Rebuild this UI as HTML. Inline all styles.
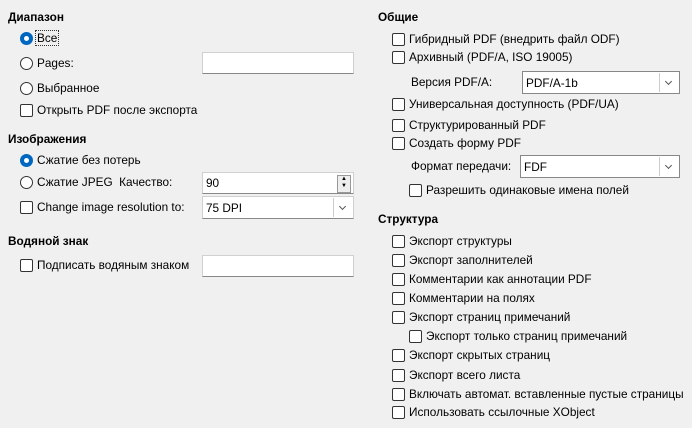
<!DOCTYPE html><html><head><meta charset="utf-8"><style>
body{margin:0;width:692px;height:428px;background:#f0f0f0;font-family:"Liberation Sans","DejaVu Sans",sans-serif;font-size:11.8px;color:#000;position:relative;overflow:hidden}
.t{position:absolute;white-space:nowrap;line-height:14px}
.b{font-weight:bold}
.cb{position:absolute;width:11px;height:11px;border:1px solid #333;border-radius:2px;background:#fff}
.rb{position:absolute;width:11px;height:11px;border:1px solid #333;border-radius:50%;background:#fff}
.rs{position:absolute;width:5px;height:5px;border:4px solid #0067c0;border-radius:50%;background:#fff}
.in{position:absolute;background:#fff;border:1px solid #d0d0d0;border-bottom:1px solid #888;box-sizing:border-box;padding:3px 3px;line-height:14px}
.dd{position:absolute;right:1px;top:1px;bottom:1px;width:18px;border-left:1px solid #ccc;background:#fff}
.dd:after{content:"";position:absolute;left:6px;top:6px;width:4px;height:4px;border-right:1px solid #555;border-bottom:1px solid #555;transform:rotate(45deg)}
</style></head><body>
<div class="t b" style="left:8px;top:10px">Диапазон</div>
<div class="rs" style="left:20px;top:32px"></div><div class="t" style="left:36px;top:31px;outline:1px dotted #333;padding:0 1px">Все</div>
<div class="rb" style="left:20px;top:57px"></div><div class="t" style="left:37px;top:56px">Pages:</div>
<div class="in" style="left:202px;top:52px;width:152px;height:22px"></div>
<div class="rb" style="left:20px;top:82px"></div><div class="t" style="left:37px;top:81px">Выбранное</div>
<div class="cb" style="left:20px;top:104px"></div><div class="t" style="left:37px;top:103px">Открыть PDF после экспорта</div>
<div class="t b" style="left:8px;top:132px">Изображения</div>
<div class="rs" style="left:20px;top:154px"></div><div class="t" style="left:37px;top:153px">Сжатие без потерь</div>
<div class="rb" style="left:20px;top:176px"></div><div class="t" style="left:37px;top:175px">Сжатие JPEG&nbsp; Качество:</div>
<div class="in" style="left:202px;top:172px;width:152px;height:22px">90
<div style="position:absolute;right:2px;top:2px;width:12px;height:16px;background:#eee;border:1px solid #999;font-size:6px;line-height:7px;text-align:center">▲<br>▼</div></div>
<div class="cb" style="left:20px;top:201px"></div><div class="t" style="left:37px;top:200px">Change image resolution to:</div>
<div class="in" style="left:202px;top:196px;width:152px;height:23px;padding-top:4px">75 DPI<div class="dd"></div></div>
<div class="t b" style="left:8px;top:234px">Водяной знак</div>
<div class="cb" style="left:20px;top:259px"></div><div class="t" style="left:37px;top:258px">Подписать водяным знаком</div>
<div class="in" style="left:202px;top:255px;width:152px;height:22px"></div>

<div class="t b" style="left:378px;top:10px">Общие</div>
<div class="cb" style="left:392px;top:33px"></div><div class="t" style="left:409px;top:32px">Гибридный PDF (внедрить файл ODF)</div>
<div class="cb" style="left:392px;top:51px"></div><div class="t" style="left:409px;top:50px">Архивный (PDF/A, ISO 19005)</div>
<div class="t" style="left:411px;top:75px">Версия PDF/A:</div>
<div class="in" style="left:522px;top:71px;width:158px;height:23px;padding-top:4px;border-color:#888">PDF/A-1b<div class="dd"></div></div>
<div class="cb" style="left:392px;top:98px"></div><div class="t" style="left:409px;top:97px">Универсальная доступность (PDF/UA)</div>
<div class="cb" style="left:392px;top:119px"></div><div class="t" style="left:409px;top:118px">Структурированный PDF</div>
<div class="cb" style="left:392px;top:137px"></div><div class="t" style="left:409px;top:136px">Создать форму PDF</div>
<div class="t" style="left:411px;top:159px">Формат передачи:</div>
<div class="in" style="left:520px;top:155px;width:160px;height:23px;padding-top:4px;border-color:#888">FDF<div class="dd"></div></div>
<div class="cb" style="left:409px;top:184px"></div><div class="t" style="left:426px;top:183px">Разрешить одинаковые имена полей</div>
<div class="t b" style="left:378px;top:212px">Структура</div>
<div class="cb" style="left:392px;top:235px"></div><div class="t" style="left:409px;top:234px">Экспорт структуры</div>
<div class="cb" style="left:392px;top:254px"></div><div class="t" style="left:409px;top:253px">Экспорт заполнителей</div>
<div class="cb" style="left:392px;top:273px"></div><div class="t" style="left:409px;top:272px">Комментарии как аннотации PDF</div>
<div class="cb" style="left:392px;top:292px"></div><div class="t" style="left:409px;top:291px">Комментарии на полях</div>
<div class="cb" style="left:392px;top:311px"></div><div class="t" style="left:409px;top:310px">Экспорт страниц примечаний</div>
<div class="cb" style="left:409px;top:330px"></div><div class="t" style="left:426px;top:329px">Экспорт только страниц примечаний</div>
<div class="cb" style="left:392px;top:349px"></div><div class="t" style="left:409px;top:348px">Экспорт скрытых страниц</div>
<div class="cb" style="left:392px;top:369px"></div><div class="t" style="left:409px;top:368px">Экспорт всего листа</div>
<div class="cb" style="left:392px;top:388px"></div><div class="t" style="left:409px;top:387px">Включать автомат. вставленные пустые страницы</div>
<div class="cb" style="left:392px;top:406px"></div><div class="t" style="left:409px;top:405px">Использовать ссылочные XObject</div>
</body></html>
